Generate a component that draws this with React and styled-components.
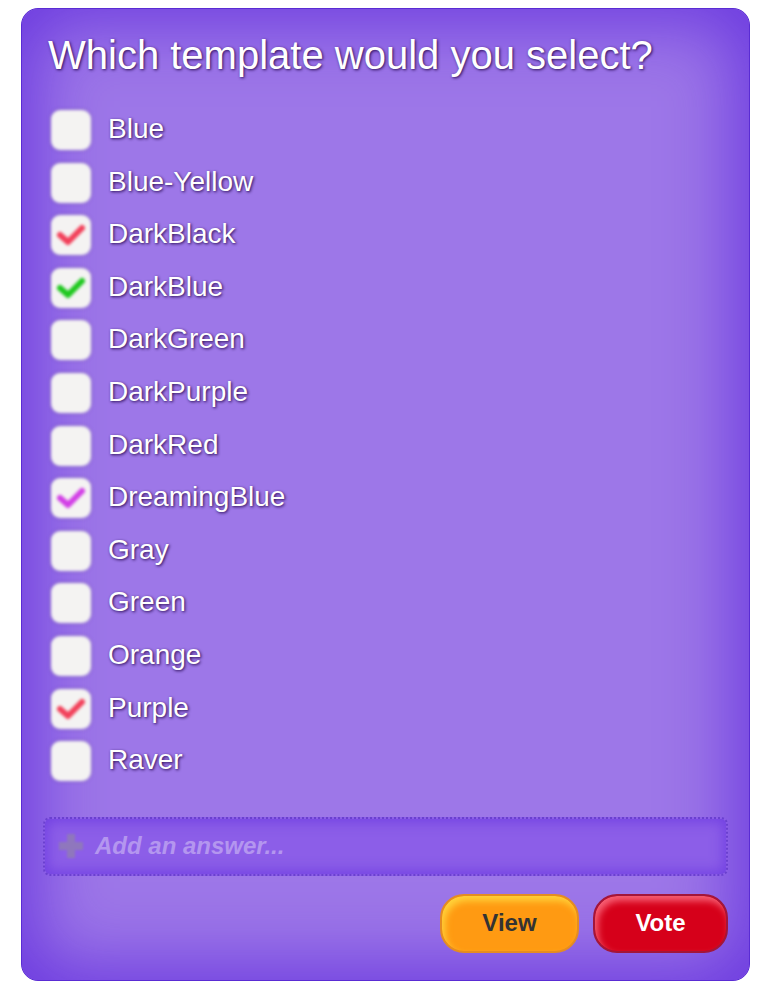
import React from "react";
import styled, { createGlobalStyle } from "styled-components";

const Global = createGlobalStyle`
  html, body { margin: 0; padding: 0; background: #ffffff; }
  body { font-family: "Liberation Sans", Arial, sans-serif; }
`;

const Card = styled.div`
  box-sizing: border-box;
  width: 729px;
  height: 973px;
  margin: 8px 0 0 21px;
  border: 1px solid #5a2cd4;
  border-radius: 17px;
  background: #9d77e8;
  box-shadow: inset 0 0 70px 14px rgba(104, 54, 222, 0.95);
  padding: 23px 21px 0 21px;
  display: flex;
  flex-direction: column;
`;

const Title = styled.h1`
  margin: 0 0 0 5px;
  font-family: "Liberation Sans", Arial, sans-serif;
  font-size: 40px;
  font-weight: normal;
  line-height: 46px;
  color: #ffffff;
  text-shadow: 1px 1px 3px rgba(30, 0, 70, 0.9);
`;

const List = styled.div`
  margin-top: 32px;
  padding-left: 8px;
  display: flex;
  flex-direction: column;
`;

const Row = styled.label`
  height: 52.6px;
  display: flex;
  align-items: flex-start;
  gap: 17px;
`;

const Box = styled.span`
  flex: none;
  width: 40px;
  height: 40px;
  border-radius: 9px;
  background: #f4f3f2;
  filter: blur(1.6px);
  box-shadow: 0 0 3px rgba(90, 60, 120, 0.5);
  display: flex;
  align-items: center;
  justify-content: center;
`;

const Label = styled.span`
  font-family: "Liberation Sans", Arial, sans-serif;
  font-size: 28px;
  line-height: 40px;
  margin-top: -1px;
  color: #ffffff;
  text-shadow: 1px 1px 3px rgba(30, 0, 70, 0.95);
`;

const AnswerBox = styled.div`
  box-sizing: border-box;
  margin-top: 23px;
  height: 59px;
  border: 2px dotted #6a40cf;
  border-radius: 7px;
  background: #8c5ee8;
  box-shadow: inset 0 0 14px 2px rgba(110, 60, 225, 0.9);
  display: flex;
  align-items: center;
  padding-left: 12px;
  gap: 10px;
`;

const Plus = styled.svg`
  flex: none;
  filter: blur(0.8px);
`;

const Placeholder = styled.span`
  font-family: "Liberation Sans", Arial, sans-serif;
  font-size: 24px;
  font-weight: bold;
  font-style: italic;
  color: #b496ef;
`;

const Buttons = styled.div`
  margin-top: 18px;
  display: flex;
  justify-content: flex-end;
  gap: 14px;
`;

const Button = styled.button`
  box-sizing: border-box;
  height: 59px;
  width: ${(p) => p.$w}px;
  border-radius: 24px;
  font-family: "Liberation Sans", Arial, sans-serif;
  font-size: 24px;
  font-weight: bold;
  cursor: pointer;
  border: 2px solid ${(p) => p.$border};
  background: ${(p) => p.$bg};
  color: ${(p) => p.$color};
  box-shadow: inset 3px 5px 7px ${(p) => p.$hi};
`;

const checkColors = {
  red: "#f2405a",
  green: "#1ec81e",
  magenta: "#d23ee6",
};

const Check = ({ color }) => (
  <svg width="28" height="24" viewBox="0 0 28 24">
    <path
      d="M3 12 L11 19 L25 5"
      fill="none"
      stroke={checkColors[color]}
      strokeWidth="6"
      strokeLinecap="round"
      strokeLinejoin="round"
    />
  </svg>
);

const items = [
  ["Blue"],
  ["Blue-Yellow"],
  ["DarkBlack", "red"],
  ["DarkBlue", "green"],
  ["DarkGreen"],
  ["DarkPurple"],
  ["DarkRed"],
  ["DreamingBlue", "magenta"],
  ["Gray"],
  ["Green"],
  ["Orange"],
  ["Purple", "red"],
  ["Raver"],
];

export default function App() {
  return (
    <>
      <Global />
      <Card>
        <Title>Which template would you select?</Title>
        <List>
          {items.map(([name, check]) => (
            <Row key={name}>
              <Box>{check && <Check color={check} />}</Box>
              <Label>{name}</Label>
            </Row>
          ))}
        </List>
        <AnswerBox>
          <Plus width="28" height="28" viewBox="0 0 28 28">
            <path
              d="M10 2 H18 V10 H26 V18 H18 V26 H10 V18 H2 V10 H10 Z"
              fill="#8f77bd"
            />
          </Plus>
          <Placeholder>Add an answer...</Placeholder>
        </AnswerBox>
        <Buttons>
          <Button $w={139} $bg="#ff9a12" $border="#e48c22" $color="#333333" $hi="#ffd23a">
            View
          </Button>
          <Button $w={135} $bg="#d6001a" $border="#a3163a" $color="#ffffff" $hi="rgba(255,120,140,0.8)">
            Vote
          </Button>
        </Buttons>
      </Card>
    </>
  );
}
